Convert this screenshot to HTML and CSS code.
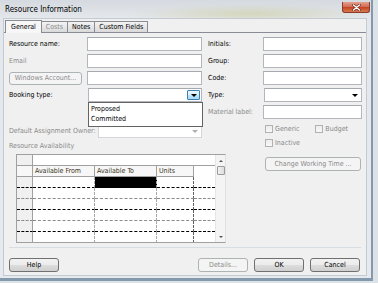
FILE: index.html
```html
<!DOCTYPE html>
<html lang="en">
<head>
  <meta charset="UTF-8">
  <title>Resource Information</title>
  <link rel="stylesheet" href="styles.css">
</head>
<body>
  <div class="window">
    <div class="titlebar">
      <span class="title">Resource Information</span>
      <div class="close">
        <svg width="9" height="7" viewBox="0 0 9 7">
          <path d="M1.5 1 L7.5 6 M7.5 1 L1.5 6" stroke="#6b2a1c" stroke-width="2.6" stroke-linecap="round"/>
          <path d="M1.5 1 L7.5 6 M7.5 1 L1.5 6" stroke="#fff" stroke-width="1.4" stroke-linecap="round"/>
        </svg>
      </div>
    </div>

    <div class="client">
      <div class="tabs">
        <div class="tab active">General</div>
        <div class="tab disabled">Costs</div>
        <div class="tab">Notes</div>
        <div class="tab">Custom Fields</div>
      </div>

      <div class="panel">
        <div class="form">
          <!-- row 1 -->
          <label class="lbl">Resource name:</label>
          <div class="input c2"></div>
          <label class="lbl c4">Initials:</label>
          <div class="input c5"></div>

          <!-- row 2 -->
          <label class="lbl off">Email</label>
          <div class="input c2"></div>
          <label class="lbl c4">Group:</label>
          <div class="input c5"></div>

          <!-- row 3 -->
          <div class="btn off account">Windows Account...</div>
          <div class="input c2"></div>
          <label class="lbl c4">Code:</label>
          <div class="input c5"></div>

          <!-- row 4 -->
          <label class="lbl">Booking type:</label>
          <div class="combo c2 open">
            <div class="drop hot"><span class="arrow"></span></div>
            <ul class="list">
              <li>Proposed</li>
              <li>Committed</li>
            </ul>
          </div>
          <label class="lbl c4">Type:</label>
          <div class="combo c5">
            <div class="drop"><span class="arrow"></span></div>
          </div>

          <!-- row 5 -->
          <label class="lbl off c4">Material label:</label>
          <div class="input c5"></div>

          <!-- row 6 -->
          <div class="owner">
            <label class="lbl off">Default Assignment Owner:</label>
            <div class="combo dim">
              <div class="drop"><span class="arrow"></span></div>
            </div>
          </div>
          <div class="checks c5">
            <label class="check"><span class="box"></span>Generic</label>
            <label class="check budget"><span class="box"></span>Budget</label>
          </div>

          <!-- row 7 -->
          <label class="lbl off avail">Resource Availability</label>
          <div class="checks c5 inactive">
            <label class="check"><span class="box"></span>Inactive</label>
          </div>

          <!-- row 8 -->
          <div class="sheet">
            <table class="grid">
              <colgroup>
                <col style="width:16px"><col style="width:62px"><col style="width:62px"><col style="width:37px"><col>
              </colgroup>
              <tr class="edit"><td class="rh"></td><td colspan="4"></td></tr>
              <tr class="head"><th class="rh"></th><th>Available From</th><th>Available To</th><th>Units</th><th class="blank"></th></tr>
              <tr class="dark"><td class="rh"></td><td></td><td class="sel"></td><td></td><td class="blank"></td></tr>
              <tr class="light"><td class="rh"></td><td></td><td></td><td></td><td class="blank"></td></tr>
              <tr class="dark"><td class="rh"></td><td></td><td></td><td></td><td class="blank"></td></tr>
              <tr class="light"><td class="rh"></td><td></td><td></td><td></td><td class="blank"></td></tr>
              <tr class="dark"><td class="rh"></td><td></td><td></td><td></td><td class="blank"></td></tr>
              <tr class="dark"><td class="rh"></td><td></td><td></td><td></td><td class="blank"></td></tr>
              <tr class="last"><td class="rh"></td><td></td><td></td><td></td><td class="blank"></td></tr>
            </table>
            <div class="scroll">
              <span class="up"></span>
              <span class="thumb"></span>
              <span class="down"></span>
            </div>
          </div>
          <div class="btn off working">Change Working Time ...</div>
        </div>
      </div>

      <div class="footer">
        <div class="btn">Help</div>
        <div class="btn off push">Details...</div>
        <div class="btn">OK</div>
        <div class="btn">Cancel</div>
      </div>
    </div>
  </div>
</body>
</html>
```

FILE: styles.css
```css
body {
  margin: 0;
  background: #dde2e7;
  font-family: "DejaVu Sans Condensed", "Liberation Sans", sans-serif;
  font-size: 7px;
  color: #000;
}

.window {
  width: 373px;
  height: 281px;
  box-sizing: border-box;
  display: flex;
  flex-direction: column;
  padding: 0 4px 2px 3px;
  border-right: 2px solid #8599ad;
  border-bottom: 3px solid #8599ad;
  background:
    radial-gradient(ellipse 120px 10px at 250px 14px, rgba(190, 190, 110, 0.35), transparent),
    linear-gradient(#d5dae0 0, #e4e7eb 18px, #e6e9ed 100%);
}

.titlebar {
  height: 18px;
  display: flex;
  justify-content: space-between;
  align-items: flex-start;
}
.title {
  margin: 5px 0 0 2px;
  font-size: 8px;
}
.close {
  width: 28px;
  height: 11px;
  margin: 2px -3px 0 0;
  box-sizing: border-box;
  border: 1px solid #8a3b2b;
  border-top: none;
  border-radius: 0 0 3px 3px;
  background: linear-gradient(#e4a08f, #cf6a52 50%, #c2401f 51%, #d77a50);
  display: flex;
  align-items: center;
  justify-content: center;
}

.client {
  flex: 1;
  display: flex;
  flex-direction: column;
  background: #f0f0f0;
  border: 1px solid #c2cad2;
}

/* tabs */
.tabs {
  display: flex;
  align-items: flex-end;
  height: 12px;
  padding: 1px 0 0 1px;
}
.tab {
  height: 10px;
  padding: 0 4px;
  margin-right: -1px;
  line-height: 10px;
  border: 1px solid #898c95;
  border-bottom: none;
  background: linear-gradient(#f3f3f3, #e6e6e6 50%, #dadada);
}
.tab.active {
  height: 12px;
  line-height: 12px;
  padding: 0 5px;
  background: #f7f7f7;
  position: relative;
  z-index: 1;
  margin-bottom: -1px;
}
.tab.disabled {
  color: #8d8d8d;
}

.panel {
  border-top: 1px solid #898c95;
  padding: 4px 5px 0 5px;
}

.form {
  display: grid;
  grid-template-columns: 78px 115px 6px 55px 99px;
  grid-template-rows: 14px 14px 14px 14px 14px 16px 10px 89px;
  row-gap: 3px;
}
.c2 { grid-column: 2; }
.c4 { grid-column: 4; }
.c5 { grid-column: 5; }

.lbl {
  grid-column: 1;
  align-self: center;
  white-space: nowrap;
}
.lbl.c4 { grid-column: 4; }
.off { color: #8a8a8a; }

.input, .combo {
  height: 14px;
  box-sizing: border-box;
  background: #fff;
  border: 1px solid #b3b7bd;
  border-top-color: #a5a9b0;
}
.combo {
  position: relative;
  display: flex;
  justify-content: flex-end;
  padding: 1px;
}
.combo.c2 { margin-left: 1px; }
.combo.c5 { margin-left: 1px; }
.drop {
  width: 11px;
  display: flex;
  align-items: center;
  justify-content: center;
}
.drop.hot {
  border: 1px solid #3c7fb1;
  border-radius: 1px;
  background: linear-gradient(#eaf6fd, #d9f0fc 50%, #bee6fd 51%, #a7d9f5);
}
.arrow {
  width: 0;
  height: 0;
  border-left: 3px solid transparent;
  border-right: 3px solid transparent;
  border-top: 3px solid #000;
}
.combo.dim { border-color: #d3d6da; }
.combo.dim .arrow { border-top-color: #b0b0b0; }

.list {
  position: absolute;
  top: 13px;
  left: -1px;
  right: -2px;
  margin: 0;
  padding: 1px 0 2px 2px;
  list-style: none;
  background: #fff;
  border: 1px solid #646464;
  z-index: 2;
}
.list li {
  height: 10px;
  line-height: 10px;
}

.owner {
  grid-column: 1 / 3;
  align-self: end;
  display: flex;
  justify-content: space-between;
  align-items: center;
}
.owner .combo {
  width: 104px;
}
.avail {
  grid-column: 1 / 3;
}

.checks {
  display: flex;
  align-items: center;
  margin: 3px 0 0 2px;
  align-self: start;
  color: #8a8a8a;
}
.checks.inactive { margin-top: -2px; }
.check {
  display: flex;
  align-items: center;
  gap: 2px;
  height: 8px;
}
.check.budget { margin-left: auto; margin-right: 14px; }
.box {
  width: 8px;
  height: 8px;
  box-sizing: border-box;
  border: 1px solid #b1b1b1;
  background: linear-gradient(#ececec, #f8f8f8);
}

/* buttons */
.btn {
  height: 14px;
  box-sizing: border-box;
  border: 1px solid #707070;
  border-radius: 3px;
  background: linear-gradient(#f2f2f2, #ebebeb 50%, #dddddd 51%, #cfcfcf);
  display: flex;
  align-items: center;
  justify-content: center;
  white-space: nowrap;
  width: 50px;
}
.btn.off {
  border-color: #adb2b5;
  background: #f4f4f4;
  color: #8a8a8a;
}
.account {
  width: 73px;
  height: 13px;
  align-self: center;
}
.working {
  grid-column: 5;
  align-self: start;
  width: 96px;
  margin: 3px 0 0 2px;
}

/* availability sheet */
.sheet {
  grid-column: 1 / 5;
  margin-left: 7px;
  width: 210px;
  box-sizing: border-box;
  border: 1px solid #a0a0a0;
  border-right-color: #e0e0e0;
  background: #fff;
  display: flex;
  overflow: hidden;
}
.grid {
  flex: 1;
  table-layout: fixed;
  border-collapse: separate;
  border-spacing: 0;
  height: 0;
}
.grid td, .grid th {
  padding: 0;
  height: 11px;
  box-sizing: border-box;
  border-right: 1px dashed #a8a8a8;
}
.grid tr.dark td { border-bottom: 1px dashed #000; }
.grid tr.light td { border-bottom: 1px dashed #8a8a8a; }
.grid tr.last td { height: 4px; }
.grid td.rh, .grid th.rh {
  background: #f0f0f0;
  border-right: 1px solid #a0a0a0;
  border-bottom: 1px solid #b4b4b4;
}
.grid td.blank, .grid th.blank {
  border-right: none;
  border-bottom: none;
}
.grid td:nth-child(4) { border-right-color: #606060; }
.grid tr.edit td {
  height: 11px;
  border-bottom: 1px solid #a0a0a0;
  border-right: none;
}
.grid tr.edit td.rh { border-right: 1px solid #a0a0a0; }
.grid tr.head th {
  height: 11px;
  font-weight: normal;
  text-align: left;
  padding-left: 2px;
  color: #3a3422;
  background: #f7f7f7;
  border-right: 1px solid #a0a0a0;
  border-bottom: 1px solid #a0a0a0;
}
.grid tr.head th.blank {
  background: #fff;
  border: none;
}
.grid td.sel { background: #000; }

.scroll {
  width: 10px;
  background: #f4f4f4;
  border-left: 1px solid #e6e6e6;
  display: flex;
  flex-direction: column;
  align-items: center;
  padding-top: 5px;
  box-sizing: border-box;
}
.up, .down {
  width: 0;
  height: 0;
  border-left: 2px solid transparent;
  border-right: 2px solid transparent;
}
.up { border-bottom: 2px solid #555; }
.down { border-top: 2px solid #555; margin-top: auto; margin-bottom: 4px; }
.thumb {
  width: 8px;
  height: 9px;
  margin-top: 4px;
  box-sizing: border-box;
  border: 1px solid #9a9a9a;
  border-radius: 1px;
  background: linear-gradient(90deg, #f2f2f2, #dcdcdc);
}

/* footer */
.footer {
  margin: 4px 5px 0 5px;
  padding: 10px 1px 0 0;
  border-top: 1px solid #d5dde3;
  display: flex;
  gap: 6px;
}
.push { margin-left: auto; }
```
